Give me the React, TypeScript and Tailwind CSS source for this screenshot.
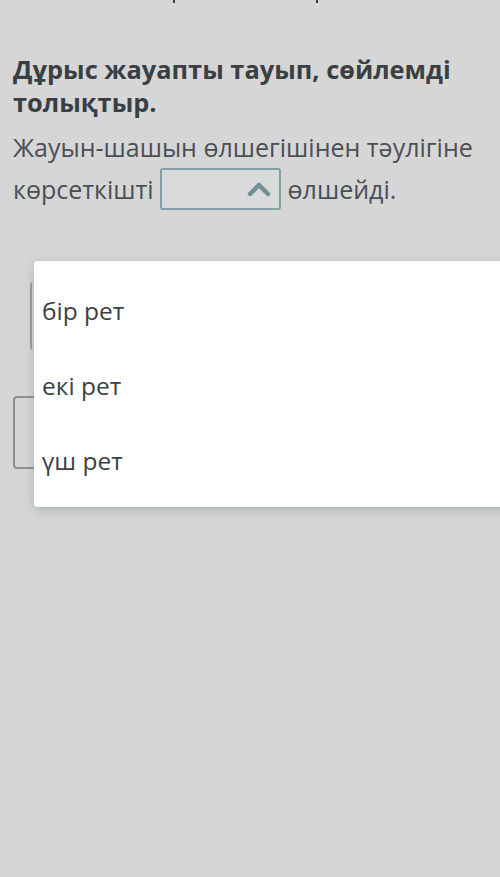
const options = ["бір рет", "екі рет", "үш рет"];

export default function App() {
  return (
    <div
      className="relative h-[877px] w-[500px] overflow-hidden bg-[#d6d6d6] text-[#474c52]"
      style={{ fontFamily: '"Open Sans", "Noto Sans", sans-serif' }}
    >
      {/* descenders of the line scrolled off above */}
      <div className="flex h-[4px] items-start gap-[141px] pl-[173px]">
        <span className="h-[3px] w-[2px] bg-[#3b3b3b]" />
        <span className="h-[3px] w-[2px] bg-[#3b3b3b]" />
      </div>

      <div className="px-[13px] pt-[49px]">
        <h2 className="text-[25.4px] font-bold leading-[33px] text-[#3a3f44]">
          Дұрыс жауапты тауып, сөйлемді толықтыр.
        </h2>
        <p className="mt-[7px] text-[25px] leading-[42px] text-[#4a4f55]">
          Жауын-шашын өлшегішінен тәулігіне көрсеткішті{" "}
          <span className="inline-flex h-[42px] w-[121px] items-center justify-end rounded-[3px] border-2 border-[#82a0a5] bg-[#d9dada] pr-[8px] align-top">
            <svg width="24" height="16" viewBox="0 0 24 16" fill="none">
              <path d="M3 13L12 4L21 13" stroke="#6f9097" strokeWidth="4.5" strokeLinecap="round" strokeLinejoin="round" />
            </svg>
          </span>{" "}
          өлшейді.
        </p>
      </div>

      {/* answer fields behind the open menu */}
      <div className="mt-[72px] flex flex-col gap-[46px] pl-[13px]">
        <div className="ml-[17px] h-[68px] w-[400px] rounded-[3px] border-l-2 border-[#9a9c9d]" />
        <div className="h-[73px] w-[300px] rounded-[4px] border-2 border-[#8d8f90]" />
      </div>

      {/* open dropdown */}
      <div className="absolute left-[34px] top-[261px] h-[246px] w-[480px] rounded-[3px] bg-white shadow-[0_3px_10px_rgba(90,120,120,0.35)]">
        <ul className="flex flex-col gap-[25px] pl-[8px] pt-[25px] text-[24.5px] leading-[50px] text-[#3c4146]">
          {options.map((o) => (
            <li key={o}>{o}</li>
          ))}
        </ul>
      </div>
    </div>
  );
}
